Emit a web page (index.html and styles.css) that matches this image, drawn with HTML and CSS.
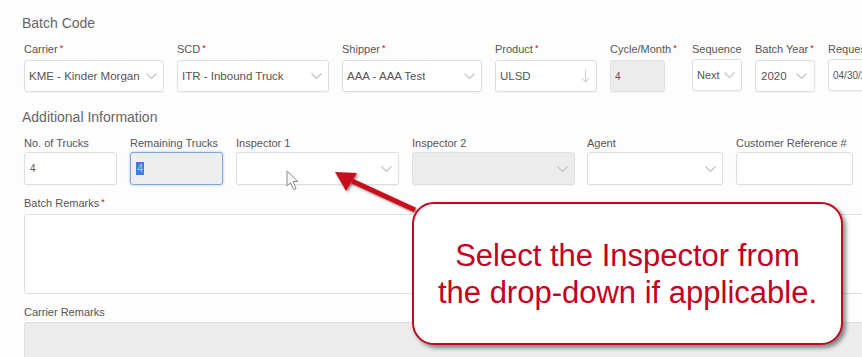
FILE: index.html
```html
<!DOCTYPE html>
<html>
<head>
<meta charset="utf-8">
<link rel="stylesheet" href="styles.css">
</head>
<body>
<div class="page">
  <h2 class="section-title">Batch Code</h2>
  <div class="row">
    <div class="field w-carrier">
      <div class="label">Carrier<span class="req">*</span></div>
      <div class="box"><span class="val">KME - Kinder Morgan</span><svg class="chev" viewBox="0 0 11 6"><path d="M0.5 0.5 L5.5 5.5 L10.5 0.5"/></svg></div>
    </div>
    <div class="field w-scd">
      <div class="label">SCD<span class="req">*</span></div>
      <div class="box"><span class="val">ITR - Inbound Truck</span><svg class="chev" viewBox="0 0 11 6"><path d="M0.5 0.5 L5.5 5.5 L10.5 0.5"/></svg></div>
    </div>
    <div class="field w-shipper">
      <div class="label">Shipper<span class="req">*</span></div>
      <div class="box"><span class="val">AAA - AAA Test</span><svg class="chev" viewBox="0 0 11 6"><path d="M0.5 0.5 L5.5 5.5 L10.5 0.5"/></svg></div>
    </div>
    <div class="field w-product">
      <div class="label">Product<span class="req">*</span></div>
      <div class="box"><span class="val">ULSD</span><svg class="down" viewBox="0 0 9 14"><path d="M4.5 0.5 V13 M0.8 9 L4.5 13 L8.2 9"/></svg></div>
    </div>
    <div class="field w-cycle">
      <div class="label">Cycle/Month<span class="req">*</span></div>
      <div class="box disabled cycle-box"><span class="val small">4</span></div>
    </div>
    <div class="field w-seq">
      <div class="label">Sequence</div>
      <div class="box"><span class="val seq">Next</span><svg class="chev" viewBox="0 0 11 6"><path d="M0.5 0.5 L5.5 5.5 L10.5 0.5"/></svg></div>
    </div>
    <div class="field w-year">
      <div class="label">Batch Year<span class="req">*</span></div>
      <div class="box"><span class="val">2020</span><svg class="chev" viewBox="0 0 11 6"><path d="M0.5 0.5 L5.5 5.5 L10.5 0.5"/></svg></div>
    </div>
    <div class="field w-req">
      <div class="label">Requested Date</div>
      <div class="box"><span class="val small">04/30/2020</span></div>
    </div>
  </div>

  <h2 class="section-title">Additional Information</h2>
  <div class="row row2">
    <div class="field w-trucks">
      <div class="label">No. of Trucks</div>
      <div class="box tall"><span class="val small pad">4</span></div>
    </div>
    <div class="field w-trucks">
      <div class="label">Remaining Trucks</div>
      <div class="box tall focused"><span class="sel">4</span></div>
    </div>
    <div class="field w-insp">
      <div class="label">Inspector 1</div>
      <div class="box tall"><span class="val"></span><svg class="chev" viewBox="0 0 11 6"><path d="M0.5 0.5 L5.5 5.5 L10.5 0.5"/></svg></div>
    </div>
    <div class="field w-insp2">
      <div class="label">Inspector 2</div>
      <div class="box tall disabled"><span class="val"></span><svg class="chev" viewBox="0 0 11 6"><path d="M0.5 0.5 L5.5 5.5 L10.5 0.5"/></svg></div>
    </div>
    <div class="field w-agent">
      <div class="label">Agent</div>
      <div class="box tall"><span class="val"></span><svg class="chev" viewBox="0 0 11 6"><path d="M0.5 0.5 L5.5 5.5 L10.5 0.5"/></svg></div>
    </div>
    <div class="field w-cref">
      <div class="label">Customer Reference #</div>
      <div class="box tall"></div>
    </div>
  </div>

  <div class="block">
    <div class="label">Batch Remarks<span class="req">*</span></div>
    <div class="textarea"></div>
  </div>
  <div class="block">
    <div class="label">Carrier Remarks</div>
    <div class="textarea disabled"></div>
  </div>
</div>

<svg class="cursor" viewBox="0 0 14 21">
  <path d="M1 1 L1 16 L4.5 12.5 L7.5 19.5 L10 18.5 L7 11.5 L12 11.5 Z"/>
</svg>

<svg class="arrow" viewBox="0 0 100 60">
  <defs>
    <filter id="sh" x="-20%" y="-20%" width="140%" height="140%">
      <feDropShadow dx="1.5" dy="1.5" stdDeviation="1" flood-color="#000" flood-opacity="0.45"/>
    </filter>
  </defs>
  <g filter="url(#sh)">
    <path class="shaft" d="M22 14 L85 43"/>
    <path class="head" d="M5 5 L27 6 L16 24 Z"/>
  </g>
</svg>

<div class="callout">
  <p>Select the Inspector from<br>the drop-down if applicable.</p>
</div>
</body>
</html>
```

FILE: styles.css
```css
html, body {
  margin: 0;
  padding: 0;
  background: #fdfdfd;
  overflow: hidden;
  width: 862px;
  height: 357px;
}

body {
  position: relative;
  font-family: "Liberation Sans", Arial, sans-serif;
  color: #555;
}

.page {
  width: 1000px;
  padding: 15px 0 0 22px;
}

.section-title {
  margin: 0 0 11px 0;
  font-size: 14px;
  line-height: 16px;
  font-weight: normal;
  color: #666;
}

.row {
  display: flex;
  gap: 13px;
  padding-left: 2px;
  margin-bottom: 17px;
}

.row2 {
  margin-bottom: 11px;
}

.field {
  display: flex;
  flex-direction: column;
  flex: none;
}

.label {
  font-size: 11px;
  line-height: 14px;
  color: #555;
  margin-bottom: 3px;
  white-space: nowrap;
}

.row2 .label {
  margin-bottom: 2px;
}

.req {
  color: #d0021b;
  font-size: 9px;
  position: relative;
  top: -2px;
  margin-left: 2px;
}

.box {
  height: 32px;
  box-sizing: border-box;
  border: 1px solid #dedede;
  border-radius: 3px;
  background: #fff;
  box-shadow: 0 1px 1px rgba(0, 0, 0, 0.04);
  display: flex;
  align-items: center;
  justify-content: space-between;
  padding: 0 6px 0 4px;
  overflow: hidden;
}

.box.tall {
  height: 33px;
}

.box.disabled {
  background: #ececec;
  border-color: #e0e0e0;
}

.val {
  font-size: 11.5px;
  color: #555;
  white-space: nowrap;
  overflow: hidden;
}

.val.small {
  font-size: 10px;
}

.val.seq {
  font-size: 11px;
}

.val.pad {
  padding-left: 1px;
}

.chev {
  width: 11px;
  height: 6px;
  flex: none;
}

.chev path {
  fill: none;
  stroke: #c4c4c4;
  stroke-width: 1.2;
}

.down {
  width: 9px;
  height: 14px;
  flex: none;
}

.down path {
  fill: none;
  stroke: #cfcfcf;
  stroke-width: 1.1;
}

.focused {
  border: 1px solid #7fa6dc;
  background: #efeeee;
  box-shadow: 0 0 3px rgba(90, 140, 220, 0.55);
  justify-content: flex-start;
  padding-left: 5px;
}

.sel {
  background: #3d7be0;
  color: #a9c6f3;
  font-size: 11px;
  line-height: 13px;
  padding: 0 1px;
}

.w-carrier { width: 140px; }
.w-scd { width: 152px; }
.w-shipper { width: 140px; }
.w-product { width: 102px; }
.w-cycle { width: 69px; }
.w-cycle .cycle-box { width: 55px; }
.w-seq { width: 50px; }
.w-seq .box { padding-left: 4px; padding-right: 6px; }
.w-year { width: 60px; }
.w-year .box { padding-left: 5px; padding-right: 7px; }
.w-req { width: 80px; }

.w-trucks { width: 93px; }
.w-insp { width: 163px; }
.w-insp2 { width: 163px; margin-right: -1px; }
.w-agent { width: 136px; }
.w-cref { width: 117px; }

.block {
  padding-left: 2px;
  margin-bottom: 11px;
}

.textarea {
  height: 80px;
  width: 900px;
  box-sizing: border-box;
  border: 1px solid #dedede;
  border-radius: 3px;
  background: #fff;
}

.textarea.disabled {
  height: 60px;
  background: #ececec;
}

.cursor {
  position: absolute;
  left: 286px;
  top: 170px;
  width: 14px;
  height: 21px;
}

.cursor path {
  fill: #fff;
  stroke: #8a8a8a;
  stroke-width: 1;
  stroke-linejoin: round;
}

.arrow {
  position: absolute;
  left: 330px;
  top: 167px;
  width: 100px;
  height: 60px;
}

.arrow .shaft {
  stroke: #c8101e;
  stroke-width: 5;
  fill: none;
}

.arrow .head {
  fill: #c8101e;
}

.callout {
  position: absolute;
  left: 412px;
  top: 202px;
  width: 431px;
  height: 143px;
  box-sizing: border-box;
  border: 2px solid #c4081e;
  border-radius: 22px;
  background: #fff;
  box-shadow: 3px 3px 4px rgba(0, 0, 0, 0.45);
  display: flex;
  align-items: center;
  justify-content: center;
}

.callout p {
  margin: 0;
  font-family: "Liberation Sans", Arial, sans-serif;
  font-size: 31px;
  line-height: 37px;
  color: #c4001e;
  text-align: center;
}
```
